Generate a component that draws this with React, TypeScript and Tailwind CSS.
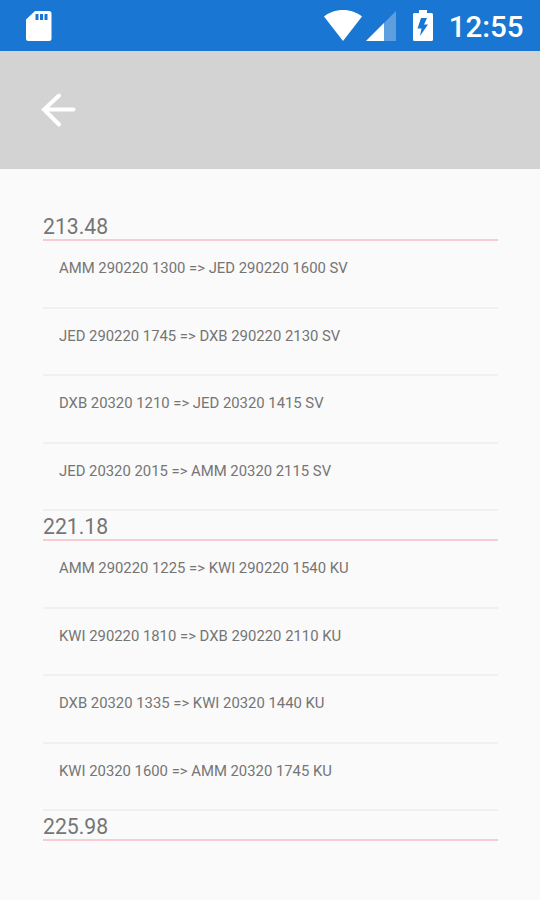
const fares = [
  {
    price: '213.48',
    legs: [
      'AMM 290220 1300 => JED 290220 1600 SV',
      'JED 290220 1745 => DXB 290220 2130 SV',
      'DXB 20320 1210 => JED 20320 1415 SV',
      'JED 20320 2015 => AMM 20320 2115 SV',
    ],
  },
  {
    price: '221.18',
    legs: [
      'AMM 290220 1225 => KWI 290220 1540 KU',
      'KWI 290220 1810 => DXB 290220 2110 KU',
      'DXB 20320 1335 => KWI 20320 1440 KU',
      'KWI 20320 1600 => AMM 20320 1745 KU',
    ],
  },
  { price: '225.98', legs: [] },
]

function StatusBar() {
  return (
    <div className="flex h-[51px] items-start bg-[#1976d2] text-white">
      <svg className="mt-[11px] ml-[26px] h-[30px] w-[26px]" viewBox="0 0 26 30" fill="currentColor">
        <path
          fillRule="evenodd"
          d="M9 0H23a2.500 2.500 0 0 1 2.500 2.500V27.500a2.500 2.500 0 0 1-2.500 2.500H2.500a2.500 2.500 0 0 1-2.500-2.500V8.500ZM9.500 3V9H12.500V3ZM14 3V9H17V3ZM18.500 3V9H21.500V3Z"
        />
      </svg>

      <svg className="mt-[10px] ml-auto h-[31px] w-[38px]" viewBox="0 0 38 31" fill="currentColor">
        <path d="M0 6.500C5 2.500 11.500 0 19 0S33 2.500 38 6.500L19 31Z" />
      </svg>
      <svg className="mt-[11px] ml-[4px] h-[30px] w-[30px]" viewBox="0 0 30 30" fill="currentColor">
        <path opacity=".3" d="M0 30H30V0Z" />
        <path d="M0 30H18V12Z" />
      </svg>
      <svg className="mt-[10px] ml-[17px] h-[31px] w-[20px]" viewBox="0 0 20 31" fill="currentColor">
        <path
          fillRule="evenodd"
          d="M6 0H14V3H18.500A1.500 1.500 0 0 1 20 4.500V29.500A1.500 1.500 0 0 1 18.500 31H1.500A1.500 1.500 0 0 1 0 29.500V4.500A1.500 1.500 0 0 1 1.500 3H6ZM8 8L4.500 18.500H8.500L7 26L15 14.500H11L14 8Z"
        />
      </svg>
      <span className="mt-[9px] mr-[16.500px] ml-[16px] text-[29.5px] leading-9 font-medium">12:55</span>
    </div>
  )
}

function Toolbar() {
  return (
    <div className="flex h-[118px] items-center bg-[#d3d3d3] pl-[41px] text-white">
      <svg
        className="h-[34px] w-[36px]"
        viewBox="0 0 36 34"
        fill="none"
        stroke="currentColor"
        strokeWidth="4"
        strokeLinecap="round"
      >
        <path d="M18 2.500L3 16.500L18 31.500M3 16.500H32.500" />
      </svg>
    </div>
  )
}

export default function App() {
  return (
    <div className="h-[900px] w-[540px] overflow-hidden bg-[#fafafa] font-['Roboto',sans-serif] text-[#757575]">
      <StatusBar />
      <Toolbar />
      <div className="mt-[42px] mr-[42px] ml-[43px]">
        {fares.map((fare) => (
          <section key={fare.price}>
            <h2 className="flex h-[30px] items-center border-b-2 border-[#f7ccd5] pt-1 text-[21.2px] leading-none">
              {fare.price}
            </h2>
            <ul>
              {fare.legs.map((leg) => (
                <li
                  key={leg}
                  className="h-[67.5px] border-b-2 border-[#f0f0f0] pt-[17px] pl-4 text-[14.85px] leading-5"
                >
                  {leg}
                </li>
              ))}
            </ul>
          </section>
        ))}
      </div>
    </div>
  )
}
